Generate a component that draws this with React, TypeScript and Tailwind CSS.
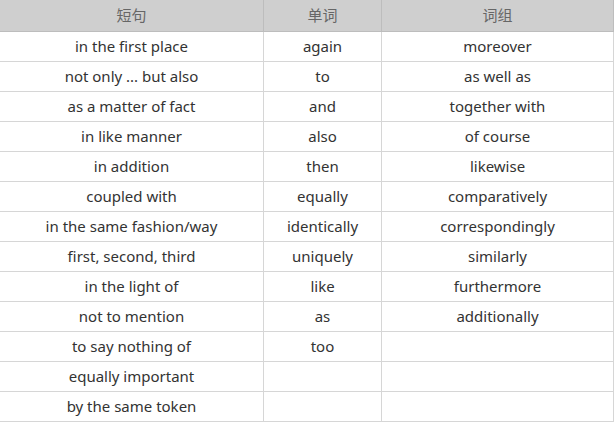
const phrases = [
  'in the first place',
  'not only ... but also',
  'as a matter of fact',
  'in like manner',
  'in addition',
  'coupled with',
  'in the same fashion/way',
  'first, second, third',
  'in the light of',
  'not to mention',
  'to say nothing of',
  'equally important',
  'by the same token',
];

const words = ['again', 'to', 'and', 'also', 'then', 'equally', 'identically', 'uniquely', 'like', 'as', 'too'];

const groups = [
  'moreover',
  'as well as',
  'together with',
  'of course',
  'likewise',
  'comparatively',
  'correspondingly',
  'similarly',
  'furthermore',
  'additionally',
];

const font = { fontFamily: '"Noto Sans", "Noto Sans CJK SC", sans-serif' };

export default function App() {
  return (
    <div className="w-[615px] h-[423px] bg-white overflow-hidden" style={font}>
      <div className="grid grid-cols-[264px_118px_232px] w-[614px] text-[15px] text-[#333]">
        {['短句', '单词', '词组'].map((h) => (
          <div
            key={h}
            className="h-[32px] flex items-center justify-center bg-[#cfcfcf] border-r border-b border-[#bdbdbd] text-[#666]"
          >
            {h}
          </div>
        ))}
        {phrases.map((p, i) => (
          <Row key={p} cells={[p, words[i] ?? '', groups[i] ?? '']} />
        ))}
      </div>
    </div>
  );
}

function Row({ cells }: { cells: string[] }) {
  return (
    <>
      {cells.map((c, j) => (
        <div
          key={j}
          className="h-[30px] flex items-center justify-center border-r border-b border-[#d6d6d6] whitespace-nowrap"
        >
          {c}
        </div>
      ))}
    </>
  );
}
